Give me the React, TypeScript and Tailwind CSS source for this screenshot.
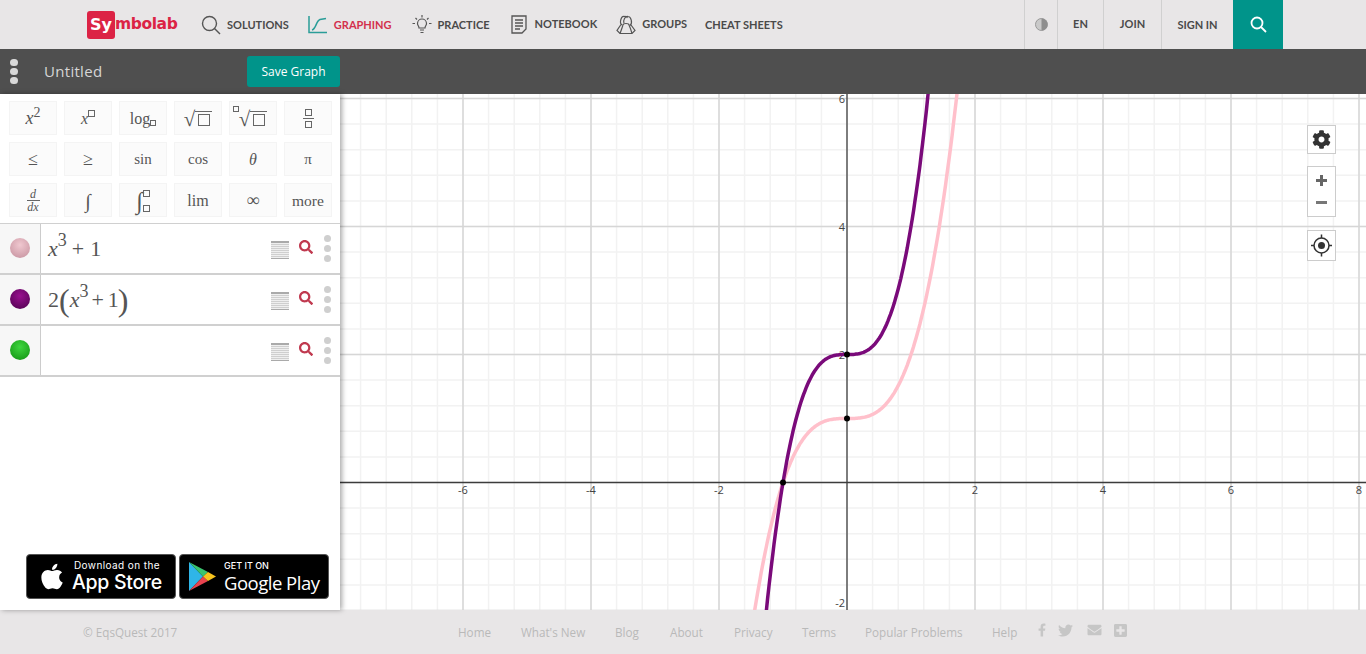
import React from "react";
import { FaApple, FaCog, FaEnvelope, FaFacebookF, FaPlusSquare, FaSearch, FaTwitter } from "react-icons/fa";

const X0 = 847;
const Y0 = 482.5;
const U = 64;

function curvePath(a: number) {
  const pts: string[] = [];
  for (let x = -2.2; x <= 2.2; x += 0.02) {
    const y = a * (x * x * x + 1);
    if (y > 7 || y < -3) continue;
    pts.push(`${(X0 + x * U).toFixed(1)},${(Y0 - y * U).toFixed(1)}`);
  }
  return "M" + pts.join("L");
}

function Graph() {
  const minorX: number[] = [];
  const minorY: number[] = [];
  for (let i = -20; i <= 21; i++) minorX.push(X0 + i * 25.6);
  for (let i = -6; i <= 16; i++) minorY.push(Y0 - i * 25.6);
  const majorX = [-6, -4, -2, 2, 4, 6, 8];
  const majorY = [-2, 2, 4, 6];
  return (
    <svg width="1026" height="516" viewBox="340 94 1026 516" className="block">
      {minorX.map((x) => <line key={x} x1={x} x2={x} y1="94" y2="610" stroke="#f2f2f2" strokeWidth="1.5" />)}
      {minorY.map((y) => <line key={y} x1="340" x2="1366" y1={y} y2={y} stroke="#f2f2f2" strokeWidth="1.5" />)}
      {majorX.map((v) => <line key={v} x1={X0 + v * U} x2={X0 + v * U} y1="94" y2="610" stroke="#d6d6d6" strokeWidth="1.5" />)}
      {majorY.map((v) => <line key={v} x1="340" x2="1366" y1={Y0 - v * U} y2={Y0 - v * U} stroke="#d6d6d6" strokeWidth="1.5" />)}
      <line x1={X0} x2={X0} y1="94" y2="610" stroke="#3c3c3c" strokeWidth="1.3" />
      <line x1="340" x2="1366" y1={Y0} y2={Y0} stroke="#3c3c3c" strokeWidth="1.3" />
      <g fontFamily="'Open Sans', sans-serif" fontSize="11" fill="#444">
        {majorX.map((v) => <text key={v} x={X0 + v * U} y="494" textAnchor="middle">{v}</text>)}
        {majorY.map((v) => <text key={v} x="845" y={v === 6 ? 103 : v === -2 ? 607 : Y0 - v * U + 4} textAnchor="end">{v}</text>)}
      </g>
      <path d={curvePath(1)} fill="none" stroke="#ffc0cb" strokeWidth="3.5" />
      <path d={curvePath(2)} fill="none" stroke="#7a0a7a" strokeWidth="3.5" />
      <circle cx={X0} cy={Y0 - U} r="3" fill="#000" />
      <circle cx={X0} cy={Y0 - 2 * U} r="3" fill="#000" />
      <circle cx={X0 - U} cy={Y0} r="3" fill="#000" />
    </svg>
  );
}

function Box({ s = 9 }: { s?: number }) {
  return <span className="inline-block border border-[#666]" style={{ width: s, height: s }} />;
}

function NavItem({ icon, label, color, className, textClass }: { icon: React.ReactNode; label: string; color?: string; className?: string; textClass?: string }) {
  return (
    <div className={"flex items-center " + (className ?? "")}>
      {icon}
      <span className={"text-[11px] font-bold " + (textClass ?? "pt-[2px] ") + " " + (color ?? "text-[#4a4a4a]")}>{label}</span>
    </div>
  );
}

function KeyBtn({ children }: { children: React.ReactNode }) {
  return (
    <div className="flex h-[34px] items-center justify-center border border-[#f4f4f4] bg-[#fbfbfb] pt-[1px] font-['Liberation_Serif',serif] text-[15px] text-[#555]">
      {children}
    </div>
  );
}

function Sqrt({ idx }: { idx?: boolean }) {
  return (
    <span className="relative flex items-end">
      {idx && <span className="absolute left-[-6px] top-[-3px] flex"><Box s={6} /></span>}
      <span className="text-[21px] leading-[20px]">√</span>
      <span className="mt-[1px] flex h-[18px] w-[17px] items-center justify-center border-t border-[#666]"><Box s={12} /></span>
    </span>
  );
}

function Row({ color, children }: { color: string; children?: React.ReactNode }) {
  return (
    <div className="flex h-[51px] border-b-2 border-[#d0d0d0] last:h-[50px] last:border-b">
      <div className="flex w-[41px] shrink-0 items-center justify-center border-r border-[#ccc] bg-[#f7f7f7] pb-[2px]">
        <span className={"h-[20px] w-[20px] rounded-full " + color} />
      </div>
      <div className="flex flex-1 items-center pl-[7px] font-['Liberation_Serif',serif] text-[22px] text-[#555]">{children}</div>
      <div className="flex items-center pr-[9px]">
        <svg width="18" height="18" viewBox="0 0 18 18" className="mr-[10px] mt-[2px]">
          <rect x="0" y="2" width="18" height="15" fill="#efefef" />
          <rect x="0" y="0" width="18" height="2" fill="#aaa" />
          {[3.5, 5.5, 7.5, 9.5, 11.5, 13.5, 15.5].map((y) => <line key={y} x1="0" x2="18" y1={y} y2={y} stroke="#cfcfcf" strokeWidth="1" />)}
          <rect x="0" y="17" width="18" height="1" fill="#aaa" />
        </svg>
        <FaSearch className="mr-[11px] mb-[4px] h-[14px] w-[14px] text-[#c0394f]" />
        <div className="mb-[1px] flex flex-col gap-[3px]">
          <span className="h-[7px] w-[7px] rounded-full bg-[#cfcfcf]" />
          <span className="h-[7px] w-[7px] rounded-full bg-[#cfcfcf]" />
          <span className="h-[7px] w-[7px] rounded-full bg-[#cfcfcf]" />
        </div>
      </div>
    </div>
  );
}

function Sup({ children }: { children: React.ReactNode }) {
  return <span className="relative top-[-9px] text-[18px] leading-none">{children}</span>;
}

export default function App() {
  return (
    <div className="flex h-[654px] w-[1366px] flex-col overflow-hidden bg-[#e8e6e7] font-['Open_Sans',sans-serif]">
      {/* top nav */}
      <header className="flex h-[49px] shrink-0 items-center pl-[87px] pr-[83px] font-['Lato',sans-serif]">
        <div className="flex w-[91px] items-center font-['DejaVu_Sans',sans-serif] text-[15.5px] font-bold text-[#dc2345]">
          <span className="flex h-[28px] w-[28px] items-center justify-center rounded-[3px] bg-[#dc2345] text-[16px] text-white">Sy</span>
          <span className="tracking-[-0.4px]">mbolab</span>
        </div>
        <NavItem className="ml-[23px]" label="SOLUTIONS" icon={
          <svg width="20" height="20" viewBox="0 0 20 20" className="mr-[6px]" fill="none" stroke="#555" strokeWidth="1.4"><circle cx="8.5" cy="8.5" r="7" /><line x1="13.5" y1="13.5" x2="19" y2="19" /></svg>
        } />
        <NavItem className="ml-[19px]" label="GRAPHING" color="text-[#d3304d]" icon={
          <svg width="20" height="18" viewBox="0 0 20 18" className="mr-[6px]" fill="none" stroke="#2a9d98" strokeWidth="1.5"><path d="M1 0V16.5H19" /><path d="M4 14C8 13 8 5 12 3.5L18 2.5" /></svg>
        } />
        <NavItem className="ml-[20px]" label="PRACTICE" icon={
          <svg width="20" height="20" viewBox="0 0 20 20" className="mr-[6px]" fill="none" stroke="#555" strokeWidth="1.2"><path d="M7 13C7 11 5.5 10.5 5.5 8.5a4.5 4.5 0 0 1 9 0C14.5 10.500 13 11 13 13Z" /><path d="M8 15H12M8.500 17.500H11.500M10 0V2.500M0.500 8.500H3M17 8.500H19.500M3.500 3L5 4.500M16.500 3L15 4.500" /></svg>
        } />
        <NavItem className="ml-[21px]" label="NOTEBOOK" textClass="pb-[1px]" icon={
          <svg width="16" height="19" viewBox="0 0 16 19" className="mr-[8px]" fill="none" stroke="#555" strokeWidth="1.3"><path d="M1 1H15V14L11 18H1Z" /><path d="M4 5H12M4 8H12M4 11H12M4 14H9" /></svg>
        } />
        <NavItem className="ml-[19px]" label="GROUPS" textClass="pb-[1px]" icon={
          <svg width="20" height="20" viewBox="0 0 20 20" className="mr-[6px]" fill="none" stroke="#555" strokeWidth="1.2"><path d="M6 10C3 8 5 1 8 1.500C10 1 11 2 11.500 3M14 10.500C17 8 15 1.500 12 1.500C9 1 7 5 8 8" /><path d="M5 9.500L1 15.500L4 18.500H7M15 10L19 15.500L16 18.500H4" /><path d="M7 10C7 8 13 8 13 10C14 12 15 15 16 18.500M7 10C6 13 5 16 4 18.500" /></svg>
        } />
        <span className="ml-[18px] pt-[2px] text-[11px] font-bold text-[#4a4a4a]">CHEAT SHEETS</span>
        <div className="ml-auto flex h-full items-stretch text-[11px] font-bold text-[#4a4a4a]">
          <div className="flex w-[33px] items-center justify-center border-l border-[#d0d0d0]">
            <svg width="13" height="13" viewBox="0 0 13 13"><circle cx="6.500" cy="6.500" r="6" fill="#c9c9c9" stroke="#999" strokeWidth="1" /><path d="M6.500 0.500a6 6 0 0 1 0 12Z" fill="#8e8e8e" /></svg>
          </div>
          <div className="flex w-[46px] items-center justify-center border-l border-[#d0d0d0]">EN</div>
          <div className="flex w-[58px] items-center justify-center border-l border-[#d0d0d0]">JOIN</div>
          <div className="flex w-[72px] items-center justify-center border-l border-[#d0d0d0] pt-[2px]">SIGN IN</div>
          <div className="flex w-[50px] items-center justify-center bg-[#00948a]">
            <svg width="17" height="17" viewBox="0 0 17 17" fill="none" stroke="#fff" strokeWidth="1.800"><circle cx="7" cy="7" r="5.500" /><line x1="11" y1="11" x2="16" y2="16" /></svg>
          </div>
        </div>
      </header>

      {/* title bar */}
      <div className="flex h-[45px] shrink-0 items-center bg-[#4f4f4f]">
        <div className="ml-[10px] flex w-[8px] flex-col gap-[1.500px]">
          <span className="h-[7.500px] w-[7.500px] rounded-full bg-[#d9d9d9]" />
          <span className="h-[7.500px] w-[7.500px] rounded-full bg-[#d9d9d9]" />
          <span className="h-[7.500px] w-[7.500px] rounded-full bg-[#d9d9d9]" />
        </div>
        <span className="ml-[26px] w-[203px] text-[15px] tracking-[0.3px] text-[#d6d6d6]">Untitled</span>
        <button className="h-[31px] w-[93px] rounded-[3px] bg-[#00948a] pt-[1px] text-[12px] font-medium text-white">Save Graph</button>
      </div>

      {/* main */}
      <div className="relative flex h-[516px] shrink-0 bg-white">
        <aside className="relative z-10 flex w-[340px] shrink-0 flex-col bg-white shadow-[2px_0_5px_rgba(0,0,0,0.35)]">
          <div className="grid grid-cols-[repeat(6,48px)] gap-[7px] border-b border-[#d0d0d0] px-[9px] pb-[6px] pt-[7px]">
            <KeyBtn><i className="text-[18px]">x</i><span className="relative top-[-6px] text-[14px]">2</span></KeyBtn>
            <KeyBtn><i className="text-[16px]">x</i><span className="relative top-[-5px] flex"><Box s={7} /></span></KeyBtn>
            <KeyBtn><span className="text-[16px]">log</span><span className="relative top-[4px] flex"><Box s={6} /></span></KeyBtn>
            <KeyBtn><Sqrt /></KeyBtn>
            <KeyBtn><Sqrt idx /></KeyBtn>
            <KeyBtn>
              <span className="flex flex-col items-center gap-[2px]"><Box s={7} /><span className="h-px w-[11px] bg-[#666]" /><Box s={7} /></span>
            </KeyBtn>
            <KeyBtn><span className="text-[18px]">≤</span></KeyBtn>
            <KeyBtn><span className="text-[18px]">≥</span></KeyBtn>
            <KeyBtn>sin</KeyBtn>
            <KeyBtn>cos</KeyBtn>
            <KeyBtn><i className="text-[16px]">θ</i></KeyBtn>
            <KeyBtn>π</KeyBtn>
            <KeyBtn>
              <span className="flex flex-col items-center text-[12px] italic leading-[12px]"><span>d</span><span className="h-px w-[13px] bg-[#666]" /><span>dx</span></span>
            </KeyBtn>
            <KeyBtn><i className="text-[20px]">∫</i></KeyBtn>
            <KeyBtn>
              <span className="flex items-center"><i className="text-[24px] leading-none">∫</i><span className="flex flex-col gap-[8px]"><Box s={7} /><Box s={7} /></span></span>
            </KeyBtn>
            <KeyBtn><span className="text-[16px]">lim</span></KeyBtn>
            <KeyBtn><span className="text-[18px]">∞</span></KeyBtn>
            <KeyBtn><span className="text-[15.5px]">more</span></KeyBtn>
          </div>
          <Row color="bg-[radial-gradient(circle_at_50%_35%,#f0c8d0,#c48f9c)]">
            <i>x</i><Sup>3</Sup><span className="ml-[5px]">+</span><span className="ml-[6px]">1</span>
          </Row>
          <Row color="bg-[radial-gradient(circle_at_50%_35%,#98108f,#4c004c)]">
            <span>2</span><span className="text-[32px] font-light leading-none">(</span><i>x</i><Sup>3</Sup><span className="ml-[3px]">+</span><span className="ml-[4px]">1</span><span className="ml-[-1px] text-[32px] font-light leading-none">)</span>
          </Row>
          <Row color="bg-[radial-gradient(circle_at_50%_35%,#3fd63f,#0f8f0f)]" />

          <div className="mt-auto mb-[11px] ml-[26px] flex gap-[3px] text-white">
            <div className="flex h-[45px] w-[150px] items-center rounded-[4px] border border-[#555] bg-black pl-[12px]">
              <FaApple className="h-[29px] w-[26px]" />
              <div className="ml-[7px] flex flex-col">
                <span className="ml-[2px] font-['Inter',sans-serif] text-[10px] leading-[11px] tracking-[0.4px]">Download on the</span>
                <span className="font-['Inter',sans-serif] text-[19.500px] font-medium leading-[23px] tracking-[-0.3px]">App Store</span>
              </div>
            </div>
            <div className="flex h-[45px] w-[150px] items-center rounded-[4px] border border-[#555] bg-black pl-[9px]">
              <svg width="27" height="29" viewBox="0 0 27 29">
                <path d="M0 0L14 14.500L0 29Z" fill="#2fb5e8" />
                <path d="M0 0L19 10L14 14.500Z" fill="#39c46f" />
                <path d="M0 29L19 19L14 14.500Z" fill="#e8434f" />
                <path d="M19 10L27 14.500L19 19L14 14.500Z" fill="#f7c31d" />
              </svg>
              <div className="ml-[8px] flex flex-col">
                <span className="font-['Inter',sans-serif] text-[9px] font-medium leading-[11px]">GET IT ON</span>
                <span className="font-['Open_Sans',sans-serif] text-[18.500px] leading-[23px] tracking-[-0.5px]">Google Play</span>
              </div>
            </div>
          </div>
        </aside>

        <div className="relative flex-1 overflow-hidden">
          <div className="ml-0 w-[1026px]"><Graph /></div>
          <div className="absolute left-[967px] top-[31px] flex h-[29px] w-[29px] items-center justify-center border border-[#ccc] bg-white">
            <FaCog className="h-[19px] w-[19px] text-[#333]" />
          </div>
          <div className="absolute left-[967px] top-[72px] flex h-[51px] w-[29px] flex-col items-center justify-center gap-[15px] border border-[#ccc] bg-white pb-[4px]">
            <span className="relative block h-[11px] w-[11px]"><span className="absolute left-0 top-[4px] h-[3px] w-[11px] bg-[#666]" /><span className="absolute left-[4px] top-0 h-[11px] w-[3px] bg-[#666]" /></span>
            <span className="h-[3px] w-[11px] bg-[#777]" />
          </div>
          <div className="absolute left-[967px] top-[136px] flex h-[31px] w-[29px] items-center justify-center border border-[#ccc] bg-white">
            <svg width="21" height="23" viewBox="0 0 21 23" fill="none" stroke="#333" strokeWidth="1.5"><circle cx="10.500" cy="11.500" r="7.500" /><circle cx="10.500" cy="11.500" r="3.500" fill="#333" stroke="none" /><path d="M10.500 0.500V4M10.500 19V22.500M0 11.500H3M18 11.500H21" /></svg>
          </div>
        </div>
      </div>

      {/* footer */}
      <footer className="flex h-[44px] shrink-0 items-center pt-[1px] text-[11.700px] text-[#b9b9b9]">
        <span className="ml-[83px] w-[375px]">© EqsQuest 2017</span>
        <span className="w-[63px]">Home</span>
        <span className="w-[94px]">What's New</span>
        <span className="w-[55px]">Blog</span>
        <span className="w-[64px]">About</span>
        <span className="w-[68px]">Privacy</span>
        <span className="w-[63px]">Terms</span>
        <span className="w-[127px]">Popular Problems</span>
        <span className="w-[46px]">Help</span>
        <div className="mb-[5px] flex items-center text-[#c6c6c6]">
          <FaFacebookF className="h-[14px] w-[8px]" />
          <FaTwitter className="ml-[12px] h-[15px] w-[15px]" />
          <FaEnvelope className="ml-[14px] h-[14px] w-[15px]" />
          <FaPlusSquare className="ml-[12px] h-[15px] w-[13px]" />
        </div>
      </footer>
    </div>
  );
}
